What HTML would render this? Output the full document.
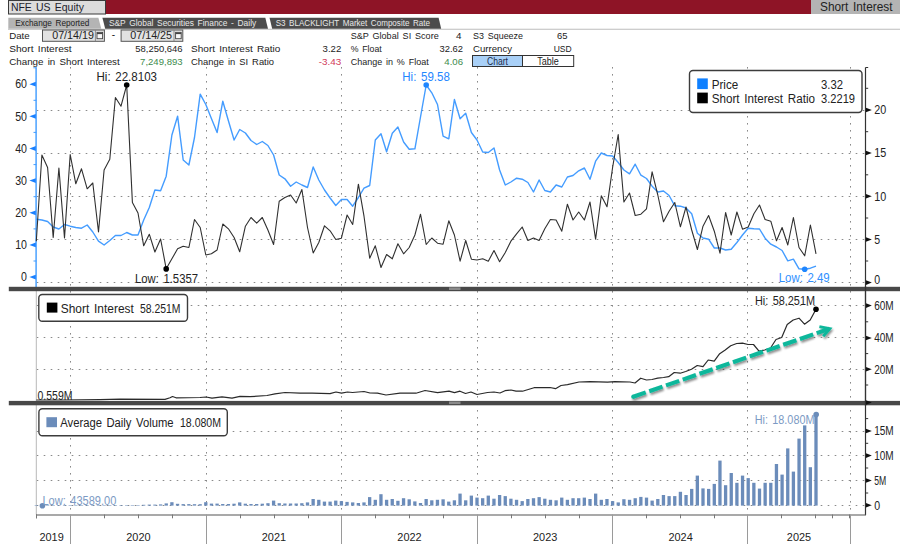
<!DOCTYPE html>
<html lang="en"><head><meta charset="utf-8"><title>NFE US Equity - Short Interest</title>
<style>html,body{margin:0;padding:0;background:#fff;}body{width:900px;height:544px;overflow:hidden;}svg{display:block;}text{font-family:"Liberation Sans", "DejaVu Sans", sans-serif;word-spacing:1.5px;}</style></head><body>
<svg width="900" height="544" viewBox="0 0 900 544">
<rect x="0" y="0" width="900" height="544" fill="#ffffff"/>
<rect x="8.5" y="0" width="891.5" height="14" fill="#8e1426"/>
<rect x="8.5" y="0.5" width="97" height="13.5" fill="#dcdcdc" stroke="#3a3a3a" stroke-width="1"/>
<text x="10.90" y="10.90" font-size="11.8" fill="#1c1c2c" text-anchor="start" textLength="73.0" lengthAdjust="spacingAndGlyphs" >NFE US Equity</text>
<rect x="811" y="0" width="89" height="14" fill="#b4b4b4"/>
<text x="820.00" y="11.10" font-size="13" fill="#222" text-anchor="start" textLength="72.5" lengthAdjust="spacingAndGlyphs" >Short Interest</text>
<line x1="8" y1="29.2" x2="900" y2="29.2" stroke="#bcbcbc" stroke-width="1.1"/>
<polygon points="8.3,17.8 98.4,17.8 101.3,28.7 8.3,28.7" fill="#b4b4b4"/>
<text x="15.30" y="26.10" font-size="9.2" fill="#222" text-anchor="start" textLength="74.0" lengthAdjust="spacingAndGlyphs" >Exchange Reported</text>
<polygon points="102.4,17.8 265.3,17.8 268,28.7 105.2,28.7" fill="#4c4c4c"/>
<text x="108.90" y="26.10" font-size="9.2" fill="#e8e8e8" text-anchor="start" textLength="147.3" lengthAdjust="spacingAndGlyphs" >S&amp;P Global Securities Finance - Daily</text>
<polygon points="269.5,17.8 438.6,17.8 441.2,28.7 272.2,28.7" fill="#4c4c4c"/>
<text x="275.70" y="26.10" font-size="9.2" fill="#e8e8e8" text-anchor="start" textLength="154.3" lengthAdjust="spacingAndGlyphs" >S3 BLACKLIGHT Market Composite Rate</text>
<text x="9.20" y="38.90" font-size="9.8" fill="#222" text-anchor="start" textLength="20.5" lengthAdjust="spacingAndGlyphs" >Date</text>
<rect x="42.5" y="30" width="61.9" height="11.3" fill="#e2e2e2" stroke="#555" stroke-width="1"/>
<text x="52.20" y="38.90" font-size="10.4" fill="#222" text-anchor="start" textLength="41.7" lengthAdjust="spacingAndGlyphs" >07/14/19</text>
<rect x="97.0" y="32.4" width="5.6" height="6.3" fill="#f8f8f8" stroke="#444" stroke-width="0.9"/>
<line x1="97.0" y1="33.5" x2="102.5" y2="33.5" stroke="#444" stroke-width="1.2"/>
<line x1="95.4" y1="30.3" x2="95.4" y2="41" stroke="#777" stroke-width="0.8"/>
<text x="111.80" y="38.00" font-size="10" fill="#222" text-anchor="start" >-</text>
<rect x="121.1" y="30" width="61.7" height="11.3" fill="#e2e2e2" stroke="#555" stroke-width="1"/>
<text x="130.20" y="38.90" font-size="10.4" fill="#222" text-anchor="start" textLength="41.9" lengthAdjust="spacingAndGlyphs" >07/14/25</text>
<rect x="175.6" y="32.4" width="5.6" height="6.3" fill="#f8f8f8" stroke="#444" stroke-width="0.9"/>
<line x1="175.6" y1="33.5" x2="181.1" y2="33.5" stroke="#444" stroke-width="1.2"/>
<line x1="174.0" y1="30.3" x2="174.0" y2="41" stroke="#777" stroke-width="0.8"/>
<text x="9.20" y="51.90" font-size="9.8" fill="#222" text-anchor="start" textLength="62.5" lengthAdjust="spacingAndGlyphs" >Short Interest</text>
<text x="182.60" y="51.90" font-size="9.8" fill="#222" text-anchor="end" textLength="47.3" lengthAdjust="spacingAndGlyphs" >58,250,646</text>
<text x="9.20" y="64.50" font-size="9.8" fill="#222" text-anchor="start" textLength="110.5" lengthAdjust="spacingAndGlyphs" >Change in Short Interest</text>
<text x="182.60" y="64.50" font-size="9.8" fill="#3d8b4d" text-anchor="end" textLength="42.5" lengthAdjust="spacingAndGlyphs" >7,249,893</text>
<text x="191.10" y="51.90" font-size="9.8" fill="#222" text-anchor="start" textLength="89.3" lengthAdjust="spacingAndGlyphs" >Short Interest Ratio</text>
<text x="341.30" y="51.90" font-size="9.8" fill="#222" text-anchor="end" textLength="18.7" lengthAdjust="spacingAndGlyphs" >3.22</text>
<text x="191.10" y="64.50" font-size="9.8" fill="#222" text-anchor="start" textLength="82.9" lengthAdjust="spacingAndGlyphs" >Change in SI Ratio</text>
<text x="341.30" y="64.50" font-size="9.8" fill="#d23a5a" text-anchor="end" textLength="22.5" lengthAdjust="spacingAndGlyphs" >-3.43</text>
<text x="350.70" y="38.90" font-size="9.8" fill="#222" text-anchor="start" textLength="88.0" lengthAdjust="spacingAndGlyphs" >S&amp;P Global SI Score</text>
<text x="461.50" y="38.90" font-size="9.8" fill="#222" text-anchor="end" >4</text>
<text x="350.70" y="51.90" font-size="9.8" fill="#222" text-anchor="start" textLength="31.0" lengthAdjust="spacingAndGlyphs" >% Float</text>
<text x="463.00" y="51.90" font-size="9.8" fill="#222" text-anchor="end" textLength="23.5" lengthAdjust="spacingAndGlyphs" >32.62</text>
<text x="350.70" y="64.50" font-size="9.8" fill="#222" text-anchor="start" textLength="78.0" lengthAdjust="spacingAndGlyphs" >Change in % Float</text>
<text x="463.00" y="64.50" font-size="9.8" fill="#3d8b4d" text-anchor="end" textLength="18.7" lengthAdjust="spacingAndGlyphs" >4.06</text>
<text x="473.00" y="38.90" font-size="9.8" fill="#222" text-anchor="start" textLength="50.0" lengthAdjust="spacingAndGlyphs" >S3 Squeeze</text>
<text x="567.50" y="38.90" font-size="9.8" fill="#222" text-anchor="end" textLength="10.5" lengthAdjust="spacingAndGlyphs" >65</text>
<text x="473.00" y="51.90" font-size="9.8" fill="#222" text-anchor="start" textLength="39.0" lengthAdjust="spacingAndGlyphs" >Currency</text>
<text x="571.70" y="51.90" font-size="9.8" fill="#222" text-anchor="end" textLength="18.0" lengthAdjust="spacingAndGlyphs" >USD</text>
<rect x="472.5" y="55.5" width="50" height="11" fill="#a9d0f7"/>
<rect x="472.5" y="55.5" width="101.2" height="11" fill="none" stroke="#333" stroke-width="1"/>
<line x1="522.5" y1="55.5" x2="522.5" y2="66.5" stroke="#333" stroke-width="1"/>
<text x="497.50" y="64.60" font-size="10" fill="#1c2c4c" text-anchor="middle" textLength="21.0" lengthAdjust="spacingAndGlyphs" >Chart</text>
<text x="548.00" y="64.60" font-size="10" fill="#222" text-anchor="middle" textLength="21.5" lengthAdjust="spacingAndGlyphs" >Table</text>
<line x1="70.5" y1="67" x2="70.5" y2="514" stroke="#8a8a8a" stroke-width="1" stroke-dasharray="1.6 5.4"/>
<line x1="206.5" y1="67" x2="206.5" y2="514" stroke="#8a8a8a" stroke-width="1" stroke-dasharray="1.6 5.4"/>
<line x1="341.5" y1="67" x2="341.5" y2="514" stroke="#8a8a8a" stroke-width="1" stroke-dasharray="1.6 5.4"/>
<line x1="477.5" y1="67" x2="477.5" y2="514" stroke="#8a8a8a" stroke-width="1" stroke-dasharray="1.6 5.4"/>
<line x1="612.5" y1="67" x2="612.5" y2="514" stroke="#8a8a8a" stroke-width="1" stroke-dasharray="1.6 5.4"/>
<line x1="747.5" y1="67" x2="747.5" y2="514" stroke="#8a8a8a" stroke-width="1" stroke-dasharray="1.6 5.4"/>
<line x1="850.5" y1="67" x2="850.5" y2="514" stroke="#8a8a8a" stroke-width="1" stroke-dasharray="1.6 5.4"/>
<line x1="36.7" y1="110.5" x2="866" y2="110.5" stroke="#8a8a8a" stroke-width="1" stroke-dasharray="1.6 5.4"/>
<line x1="36.7" y1="153.5" x2="866" y2="153.5" stroke="#8a8a8a" stroke-width="1" stroke-dasharray="1.6 5.4"/>
<line x1="36.7" y1="196.5" x2="866" y2="196.5" stroke="#8a8a8a" stroke-width="1" stroke-dasharray="1.6 5.4"/>
<line x1="36.7" y1="239.5" x2="866" y2="239.5" stroke="#8a8a8a" stroke-width="1" stroke-dasharray="1.6 5.4"/>
<line x1="36.7" y1="282.5" x2="866" y2="282.5" stroke="#8a8a8a" stroke-width="1" stroke-dasharray="1.6 5.4"/>
<line x1="36.7" y1="305.5" x2="866" y2="305.5" stroke="#8a8a8a" stroke-width="1" stroke-dasharray="1.6 5.4"/>
<line x1="36.7" y1="337.5" x2="866" y2="337.5" stroke="#8a8a8a" stroke-width="1" stroke-dasharray="1.6 5.4"/>
<line x1="36.7" y1="369.5" x2="866" y2="369.5" stroke="#8a8a8a" stroke-width="1" stroke-dasharray="1.6 5.4"/>
<line x1="36.7" y1="431.5" x2="866" y2="431.5" stroke="#8a8a8a" stroke-width="1" stroke-dasharray="1.6 5.4"/>
<line x1="36.7" y1="455.5" x2="866" y2="455.5" stroke="#8a8a8a" stroke-width="1" stroke-dasharray="1.6 5.4"/>
<line x1="36.7" y1="480.5" x2="866" y2="480.5" stroke="#8a8a8a" stroke-width="1" stroke-dasharray="1.6 5.4"/>
<line x1="36.7" y1="505.5" x2="866" y2="505.5" stroke="#8a8a8a" stroke-width="1" stroke-dasharray="1.6 5.4"/>
<line x1="36.1" y1="67.3" x2="36.1" y2="287" stroke="#4aa1ff" stroke-width="1.5"/>
<polygon points="29.4,84.2 35.8,81.8 35.8,86.6" fill="#1a80ff"/>
<text x="27.00" y="88.40" font-size="12" fill="#222" text-anchor="end" textLength="11.8" lengthAdjust="spacingAndGlyphs" >60</text>
<line x1="33.5" y1="100.3" x2="36.3" y2="100.3" stroke="#3f9bff" stroke-width="1"/>
<polygon points="29.4,116.3 35.8,113.9 35.8,118.8" fill="#1a80ff"/>
<text x="27.00" y="120.55" font-size="12" fill="#222" text-anchor="end" textLength="11.8" lengthAdjust="spacingAndGlyphs" >50</text>
<line x1="33.5" y1="132.4" x2="36.3" y2="132.4" stroke="#3f9bff" stroke-width="1"/>
<polygon points="29.4,148.5 35.8,146.1 35.8,150.9" fill="#1a80ff"/>
<text x="27.00" y="152.70" font-size="12" fill="#222" text-anchor="end" textLength="11.8" lengthAdjust="spacingAndGlyphs" >40</text>
<line x1="33.5" y1="164.6" x2="36.3" y2="164.6" stroke="#3f9bff" stroke-width="1"/>
<polygon points="29.4,180.6 35.8,178.2 35.8,183.0" fill="#1a80ff"/>
<text x="27.00" y="184.85" font-size="12" fill="#222" text-anchor="end" textLength="11.8" lengthAdjust="spacingAndGlyphs" >30</text>
<line x1="33.5" y1="196.7" x2="36.3" y2="196.7" stroke="#3f9bff" stroke-width="1"/>
<polygon points="29.4,212.8 35.8,210.4 35.8,215.2" fill="#1a80ff"/>
<text x="27.00" y="217.00" font-size="12" fill="#222" text-anchor="end" textLength="11.8" lengthAdjust="spacingAndGlyphs" >20</text>
<line x1="33.5" y1="228.9" x2="36.3" y2="228.9" stroke="#3f9bff" stroke-width="1"/>
<polygon points="29.4,244.9 35.8,242.5 35.8,247.3" fill="#1a80ff"/>
<text x="27.00" y="249.15" font-size="12" fill="#222" text-anchor="end" textLength="11.8" lengthAdjust="spacingAndGlyphs" >10</text>
<line x1="33.5" y1="261.0" x2="36.3" y2="261.0" stroke="#3f9bff" stroke-width="1"/>
<polygon points="29.4,277.1 35.8,274.7 35.8,279.5" fill="#1a80ff"/>
<text x="27.00" y="281.30" font-size="12" fill="#222" text-anchor="end" textLength="5.9" lengthAdjust="spacingAndGlyphs" >0</text>
<line x1="33.3" y1="67.8" x2="36.3" y2="67.8" stroke="#4aa1ff" stroke-width="1"/>
<polyline points="36.3,219.2 41.9,220.0 47.6,221.5 53.2,227.0 58.9,229.0 64.5,224.5 70.2,226.2 75.8,227.5 81.5,228.2 87.2,225.0 92.8,232.0 98.5,241.2 104.1,245.0 109.8,240.5 115.4,235.5 121.0,235.5 126.7,232.5 132.4,235.0 138.0,235.0 143.7,220.0 149.3,207.5 154.9,190.0 160.6,190.8 166.2,176.2 171.9,135.0 177.6,116.2 183.2,160.0 188.9,165.0 194.5,137.5 200.2,94.2 205.8,104.5 211.4,118.5 217.1,132.5 222.8,101.2 228.4,120.8 234.1,140.0 239.7,129.5 245.4,133.0 251.0,140.5 256.7,144.5 262.3,141.5 267.9,145.5 273.6,155.0 279.2,175.0 284.9,178.8 290.6,186.2 296.2,182.0 301.9,185.0 307.5,187.5 313.2,167.0 318.8,180.0 324.5,190.0 330.1,198.0 335.8,205.5 341.4,199.5 347.1,199.5 352.7,206.2 358.4,197.5 364.0,188.2 369.7,185.5 375.3,140.0 381.0,133.8 386.6,151.8 392.3,133.2 397.9,127.0 403.6,142.0 409.2,149.2 414.9,148.8 420.5,117.0 426.2,85.0 431.8,92.8 437.5,104.5 443.1,136.2 448.8,138.8 454.4,99.5 460.1,118.8 465.7,113.2 471.4,132.5 477.0,140.0 482.7,152.0 488.3,152.5 494.0,148.0 499.6,170.0 505.3,185.0 510.9,182.0 516.6,178.2 522.2,179.2 527.9,182.5 533.5,192.0 539.1,180.0 544.8,190.5 550.4,192.0 556.1,185.0 561.8,187.0 567.4,177.0 573.0,175.5 578.7,170.8 584.4,168.0 590.0,179.2 595.6,161.2 601.3,153.0 607.0,155.5 612.6,156.0 618.2,162.5 623.9,170.0 629.5,173.8 635.2,164.2 640.9,175.2 646.5,178.5 652.1,186.2 657.8,192.0 663.5,191.0 669.1,195.5 674.8,205.8 680.4,206.2 686.0,208.0 691.7,213.8 697.4,233.2 703.0,238.0 708.6,239.2 714.3,248.0 720.0,248.0 725.6,250.0 731.2,249.2 736.9,242.5 742.5,235.0 748.2,228.2 753.9,228.8 759.5,229.0 765.1,238.2 770.8,244.2 776.5,247.0 782.1,250.5 787.8,260.8 793.4,259.2 799.0,268.8 804.7,269.2 810.4,268.2 816.0,266.2" fill="none" stroke="#449cff" stroke-width="1.4" stroke-linejoin="round"/>
<polyline points="36.3,241.2 41.9,155.0 47.6,167.5 53.2,237.5 58.9,168.0 64.5,238.0 70.2,154.5 75.8,183.8 81.5,168.8 87.2,188.8 92.8,183.0 98.5,232.0 104.1,170.0 109.8,159.2 115.4,97.5 121.0,106.2 126.7,85.0 132.4,202.5 138.0,213.0 143.7,245.8 149.3,234.2 154.9,252.0 160.6,239.0 166.2,268.8 171.9,258.8 177.6,248.8 183.2,246.2 188.9,247.5 194.5,219.5 200.2,227.5 205.8,255.0 211.4,253.8 217.1,250.0 222.8,224.0 228.4,228.8 234.1,237.5 239.7,251.8 245.4,226.2 251.0,217.5 256.7,223.2 262.3,217.5 267.9,230.0 273.6,244.5 279.2,201.2 284.9,197.5 290.6,195.0 296.2,203.0 301.9,189.5 307.5,227.5 313.2,253.0 318.8,242.5 324.5,225.8 330.1,230.8 335.8,239.5 341.4,238.2 347.1,215.0 352.7,224.5 358.4,184.2 364.0,216.2 369.7,258.2 375.3,245.8 381.0,267.5 386.6,254.5 392.3,258.8 397.9,243.8 403.6,253.8 409.2,247.5 414.9,235.0 420.5,214.2 426.2,244.5 431.8,238.0 437.5,243.2 443.1,244.2 448.8,220.8 454.4,235.0 460.1,261.2 465.7,240.5 471.4,259.2 477.0,260.0 482.7,258.8 488.3,261.2 494.0,250.5 499.6,261.8 505.3,252.5 510.9,241.2 516.6,233.8 522.2,227.0 527.9,240.5 533.5,238.0 539.1,240.5 544.8,228.8 550.4,219.5 556.1,220.0 561.8,231.2 567.4,204.2 573.0,220.0 578.7,212.0 584.4,220.0 590.0,202.0 595.6,239.2 601.3,195.8 607.0,206.8 612.6,167.5 618.2,134.5 623.9,202.0 629.5,193.0 635.2,215.5 640.9,214.2 646.5,208.8 652.1,171.8 657.8,195.0 663.5,221.8 669.1,211.2 674.8,202.5 680.4,226.8 686.0,207.0 691.7,230.0 697.4,249.5 703.0,226.2 708.6,215.5 714.3,231.2 720.0,253.2 725.6,212.5 731.2,235.0 736.9,212.0 742.5,229.2 748.2,227.0 753.9,213.8 759.5,205.0 765.1,219.5 770.8,221.2 776.5,240.8 782.1,227.5 787.8,245.0 793.4,217.5 799.0,247.5 804.7,255.8 810.4,225.0 816.0,253.8" fill="none" stroke="#303030" stroke-width="1.1" stroke-linejoin="round"/>
<circle cx="126.7" cy="85" r="2.8" fill="#000"/>
<text x="96.50" y="81.00" font-size="12" fill="#222" text-anchor="start" textLength="60.5" lengthAdjust="spacingAndGlyphs" >Hi: 22.8103</text>
<circle cx="166.2" cy="268.9" r="2.8" fill="#000"/>
<text x="135.00" y="282.50" font-size="12" fill="#222" text-anchor="start" textLength="63.0" lengthAdjust="spacingAndGlyphs" >Low: 1.5357</text>
<circle cx="426.2" cy="85" r="2.8" fill="#1f86ff"/>
<text x="402.30" y="80.80" font-size="12" fill="#1f86ff" text-anchor="start" textLength="47.5" lengthAdjust="spacingAndGlyphs" >Hi: 59.58</text>
<circle cx="804.7" cy="269.2" r="2.8" fill="#1f86ff"/>
<text x="778.70" y="281.80" font-size="12" fill="#2f8fff" text-anchor="start" textLength="51.0" lengthAdjust="spacingAndGlyphs" >Low: 2.49</text>
<rect x="689.5" y="70.5" width="172.5" height="42" rx="3.5" fill="#fff" stroke="#3c3c3c" stroke-width="1.4"/>
<rect x="697.2" y="78.4" width="10.6" height="10.7" fill="#0f80ff"/>
<rect x="697.2" y="92.6" width="10.6" height="10.7" fill="#000"/>
<text x="711.70" y="88.80" font-size="12" fill="#222" text-anchor="start" textLength="26.5" lengthAdjust="spacingAndGlyphs" >Price</text>
<text x="821.00" y="88.80" font-size="12" fill="#222" text-anchor="start" textLength="22.0" lengthAdjust="spacingAndGlyphs" >3.32</text>
<text x="711.70" y="103.20" font-size="12" fill="#222" text-anchor="start" textLength="103.3" lengthAdjust="spacingAndGlyphs" >Short Interest Ratio</text>
<text x="821.00" y="103.20" font-size="12" fill="#222" text-anchor="start" textLength="34.0" lengthAdjust="spacingAndGlyphs" >3.2219</text>
<line x1="865.5" y1="67.5" x2="865.5" y2="515" stroke="#333" stroke-width="1.2"/>
<line x1="865.5" y1="67.5" x2="868.2" y2="67.5" stroke="#333" stroke-width="1"/>
<polygon points="865.9,107.7 865.9,112.3 871.8,110.0" fill="#111"/>
<text x="874.20" y="114.30" font-size="12" fill="#222" text-anchor="start" textLength="12.0" lengthAdjust="spacingAndGlyphs" >20</text>
<polygon points="865.9,150.7 865.9,155.3 871.8,153.0" fill="#111"/>
<text x="874.20" y="157.30" font-size="12" fill="#222" text-anchor="start" textLength="12.0" lengthAdjust="spacingAndGlyphs" >15</text>
<polygon points="865.9,193.9 865.9,198.5 871.8,196.2" fill="#111"/>
<text x="874.20" y="200.50" font-size="12" fill="#222" text-anchor="start" textLength="12.0" lengthAdjust="spacingAndGlyphs" >10</text>
<polygon points="865.9,237.2 865.9,241.8 871.8,239.5" fill="#111"/>
<text x="874.20" y="243.80" font-size="12" fill="#222" text-anchor="start" textLength="5.9" lengthAdjust="spacingAndGlyphs" >5</text>
<polygon points="865.9,280.3 865.9,284.9 871.8,282.6" fill="#111"/>
<text x="874.20" y="283.50" font-size="12" fill="#222" text-anchor="start" textLength="5.9" lengthAdjust="spacingAndGlyphs" >0</text>
<line x1="865.5" y1="88.3" x2="868.2" y2="88.3" stroke="#333" stroke-width="1"/>
<line x1="865.5" y1="131.7" x2="868.2" y2="131.7" stroke="#333" stroke-width="1"/>
<line x1="865.5" y1="174.8" x2="868.2" y2="174.8" stroke="#333" stroke-width="1"/>
<line x1="865.5" y1="218.0" x2="868.2" y2="218.0" stroke="#333" stroke-width="1"/>
<line x1="865.5" y1="261.0" x2="868.2" y2="261.0" stroke="#333" stroke-width="1"/>
<line x1="36.3" y1="291" x2="36.3" y2="402" stroke="#b8b8b8" stroke-width="1"/>
<polyline points="36.3,400.0 60.0,400.0 100.0,399.6 120.0,399.2 165.0,399.4 170.0,397.8 172.5,396.5 176.0,397.8 200.0,397.5 206.0,397.0 212.0,398.2 222.0,396.8 232.0,398.2 240.0,396.3 250.0,396.7 267.0,395.5 275.0,393.8 285.0,392.5 300.0,393.2 312.0,393.2 330.0,393.7 336.0,392.0 341.5,393.2 347.5,392.0 352.5,392.5 364.0,391.5 370.0,393.0 377.5,393.2 386.0,395.0 400.0,393.2 416.0,393.2 425.0,390.5 437.5,392.7 449.0,391.2 454.5,392.7 460.0,391.2 465.5,393.5 471.0,392.0 477.0,394.5 487.5,392.5 494.0,392.0 500.0,393.0 505.0,390.7 511.0,390.0 516.0,391.2 522.5,391.2 534.0,387.7 550.0,387.5 555.5,388.7 561.0,385.5 567.5,384.7 579.0,382.0 590.0,381.7 607.5,382.2 615.0,381.7 630.0,382.0 635.0,383.0 640.7,378.2 646.5,380.0 652.0,379.5 657.7,378.2 663.5,377.5 668.7,376.7 674.2,372.5 680.2,373.2 685.7,371.5 691.5,369.2 697.2,365.5 703.0,366.7 708.2,360.0 714.2,361.2 719.7,353.7 725.2,350.0 730.7,345.7 736.7,343.5 742.5,343.2 748.0,344.5 753.5,344.5 759.0,351.2 764.7,350.0 770.5,348.0 776.0,339.5 781.7,337.5 787.2,324.5 793.2,320.0 799.0,318.2 804.5,324.2 810.2,320.0 816.0,309.2" fill="none" stroke="#2a2a2a" stroke-width="1.2" stroke-linejoin="round"/>
<circle cx="816" cy="309.2" r="2.8" fill="#000"/>
<text x="755.00" y="304.80" font-size="12" fill="#222" text-anchor="start" textLength="60.0" lengthAdjust="spacingAndGlyphs" >Hi: 58.251M</text>
<text x="37.50" y="400.00" font-size="12" fill="#222" text-anchor="start" textLength="35.0" lengthAdjust="spacingAndGlyphs" >0.559M</text>
<rect x="38.8" y="294.5" width="148.7" height="26.8" rx="3.5" fill="#fff" stroke="#3c3c3c" stroke-width="1.4"/>
<rect x="46.8" y="302.6" width="10.6" height="10" fill="#000"/>
<text x="60.80" y="312.60" font-size="12" fill="#222" text-anchor="start" textLength="73.0" lengthAdjust="spacingAndGlyphs" >Short Interest</text>
<text x="140.00" y="312.60" font-size="12" fill="#222" text-anchor="start" textLength="40.5" lengthAdjust="spacingAndGlyphs" >58.251M</text>
<polygon points="865.9,303.3 865.9,307.9 871.8,305.6" fill="#111"/>
<text x="874.20" y="309.90" font-size="12" fill="#222" text-anchor="start" textLength="19.5" lengthAdjust="spacingAndGlyphs" >60M</text>
<polygon points="865.9,335.7 865.9,340.3 871.8,338.0" fill="#111"/>
<text x="874.20" y="342.30" font-size="12" fill="#222" text-anchor="start" textLength="19.5" lengthAdjust="spacingAndGlyphs" >40M</text>
<polygon points="865.9,366.9 865.9,371.5 871.8,369.2" fill="#111"/>
<text x="874.20" y="373.50" font-size="12" fill="#222" text-anchor="start" textLength="19.5" lengthAdjust="spacingAndGlyphs" >20M</text>
<line x1="865.5" y1="321.8" x2="868.2" y2="321.8" stroke="#333" stroke-width="1"/>
<line x1="865.5" y1="353.6" x2="868.2" y2="353.6" stroke="#333" stroke-width="1"/>
<line x1="865.5" y1="385.0" x2="868.2" y2="385.0" stroke="#333" stroke-width="1"/>
<defs><filter id="sh" x="-5%" y="-20%" width="110%" height="150%"><feGaussianBlur in="SourceAlpha" stdDeviation="1.2"/><feOffset dx="1.2" dy="1.8"/><feComponentTransfer><feFuncA type="linear" slope="0.45"/></feComponentTransfer><feMerge><feMergeNode/><feMergeNode in="SourceGraphic"/></feMerge></filter></defs>
<g filter="url(#sh)" stroke="#0cb79b" fill="none">
<line x1="632.5" y1="397" x2="829.6" y2="328.7" stroke-width="4.1" stroke-dasharray="14 3.72"/>
<circle cx="633.2" cy="396.8" r="2.05" fill="#0cb79b" stroke="none"/>
<polyline points="819.4,326.6 829.8,328.6 823.2,336.2" stroke-width="2.9" stroke-linejoin="miter" stroke-miterlimit="10"/>
</g>
<line x1="36.3" y1="405" x2="36.3" y2="514.5" stroke="#b8b8b8" stroke-width="1"/>
<rect x="34.65" y="505.1" width="3.3" height="0.5" fill="#6b8cba"/>
<rect x="40.30" y="505.1" width="3.3" height="0.5" fill="#6b8cba"/>
<rect x="45.95" y="505.1" width="3.3" height="0.5" fill="#6b8cba"/>
<rect x="51.60" y="505.1" width="3.3" height="0.5" fill="#6b8cba"/>
<rect x="57.25" y="505.1" width="3.3" height="0.5" fill="#6b8cba"/>
<rect x="62.90" y="505.1" width="3.3" height="0.5" fill="#6b8cba"/>
<rect x="68.55" y="505.1" width="3.3" height="0.5" fill="#6b8cba"/>
<rect x="74.20" y="505.1" width="3.3" height="0.5" fill="#6b8cba"/>
<rect x="79.85" y="505.1" width="3.3" height="0.5" fill="#6b8cba"/>
<rect x="85.50" y="505.1" width="3.3" height="0.5" fill="#6b8cba"/>
<rect x="91.15" y="505.1" width="3.3" height="0.5" fill="#6b8cba"/>
<rect x="96.80" y="505.1" width="3.3" height="0.5" fill="#6b8cba"/>
<rect x="102.45" y="505.1" width="3.3" height="0.5" fill="#6b8cba"/>
<rect x="108.10" y="505.1" width="3.3" height="0.5" fill="#6b8cba"/>
<rect x="113.75" y="505.1" width="3.3" height="0.5" fill="#6b8cba"/>
<rect x="119.40" y="505.1" width="3.3" height="0.5" fill="#6b8cba"/>
<rect x="125.05" y="505.1" width="3.3" height="0.5" fill="#6b8cba"/>
<rect x="130.70" y="505.1" width="3.3" height="0.5" fill="#6b8cba"/>
<rect x="136.35" y="505.1" width="3.3" height="0.5" fill="#6b8cba"/>
<rect x="142.00" y="504.8" width="3.3" height="0.8" fill="#6b8cba"/>
<rect x="147.65" y="504.6" width="3.3" height="1.0" fill="#6b8cba"/>
<rect x="153.30" y="504.6" width="3.3" height="1.0" fill="#6b8cba"/>
<rect x="158.95" y="504.4" width="3.3" height="1.2" fill="#6b8cba"/>
<rect x="164.60" y="503.4" width="3.3" height="2.2" fill="#6b8cba"/>
<rect x="170.25" y="502.2" width="3.3" height="3.4" fill="#6b8cba"/>
<rect x="175.90" y="503.8" width="3.3" height="1.8" fill="#6b8cba"/>
<rect x="181.55" y="504.1" width="3.3" height="1.5" fill="#6b8cba"/>
<rect x="187.20" y="504.1" width="3.3" height="1.5" fill="#6b8cba"/>
<rect x="192.85" y="504.2" width="3.3" height="1.4" fill="#6b8cba"/>
<rect x="198.50" y="504.2" width="3.3" height="1.4" fill="#6b8cba"/>
<rect x="204.15" y="502.2" width="3.3" height="3.4" fill="#6b8cba"/>
<rect x="209.80" y="503.6" width="3.3" height="2.0" fill="#6b8cba"/>
<rect x="215.45" y="503.6" width="3.3" height="2.0" fill="#6b8cba"/>
<rect x="221.10" y="504.0" width="3.3" height="1.6" fill="#6b8cba"/>
<rect x="226.75" y="504.0" width="3.3" height="1.6" fill="#6b8cba"/>
<rect x="232.40" y="503.7" width="3.3" height="1.9" fill="#6b8cba"/>
<rect x="238.05" y="502.4" width="3.3" height="3.2" fill="#6b8cba"/>
<rect x="243.70" y="503.7" width="3.3" height="1.9" fill="#6b8cba"/>
<rect x="249.35" y="504.0" width="3.3" height="1.6" fill="#6b8cba"/>
<rect x="255.00" y="504.0" width="3.3" height="1.6" fill="#6b8cba"/>
<rect x="260.65" y="503.7" width="3.3" height="1.9" fill="#6b8cba"/>
<rect x="266.30" y="503.2" width="3.3" height="2.4" fill="#6b8cba"/>
<rect x="271.95" y="500.6" width="3.3" height="5.0" fill="#6b8cba"/>
<rect x="277.60" y="503.2" width="3.3" height="2.4" fill="#6b8cba"/>
<rect x="283.25" y="503.5" width="3.3" height="2.1" fill="#6b8cba"/>
<rect x="288.90" y="503.5" width="3.3" height="2.1" fill="#6b8cba"/>
<rect x="294.55" y="503.5" width="3.3" height="2.1" fill="#6b8cba"/>
<rect x="300.20" y="503.2" width="3.3" height="2.4" fill="#6b8cba"/>
<rect x="305.85" y="502.4" width="3.3" height="3.2" fill="#6b8cba"/>
<rect x="311.50" y="499.0" width="3.3" height="6.6" fill="#6b8cba"/>
<rect x="317.15" y="499.8" width="3.3" height="5.8" fill="#6b8cba"/>
<rect x="322.80" y="501.6" width="3.3" height="4.0" fill="#6b8cba"/>
<rect x="328.45" y="501.6" width="3.3" height="4.0" fill="#6b8cba"/>
<rect x="334.10" y="500.6" width="3.3" height="5.0" fill="#6b8cba"/>
<rect x="339.75" y="501.1" width="3.3" height="4.5" fill="#6b8cba"/>
<rect x="345.40" y="501.9" width="3.3" height="3.7" fill="#6b8cba"/>
<rect x="351.05" y="502.4" width="3.3" height="3.2" fill="#6b8cba"/>
<rect x="356.70" y="503.0" width="3.3" height="2.6" fill="#6b8cba"/>
<rect x="362.35" y="502.4" width="3.3" height="3.2" fill="#6b8cba"/>
<rect x="368.00" y="497.1" width="3.3" height="8.5" fill="#6b8cba"/>
<rect x="373.65" y="499.8" width="3.3" height="5.8" fill="#6b8cba"/>
<rect x="379.30" y="494.2" width="3.3" height="11.4" fill="#6b8cba"/>
<rect x="384.95" y="499.8" width="3.3" height="5.8" fill="#6b8cba"/>
<rect x="390.60" y="499.0" width="3.3" height="6.6" fill="#6b8cba"/>
<rect x="396.25" y="500.8" width="3.3" height="4.8" fill="#6b8cba"/>
<rect x="401.90" y="498.2" width="3.3" height="7.4" fill="#6b8cba"/>
<rect x="407.55" y="499.3" width="3.3" height="6.3" fill="#6b8cba"/>
<rect x="413.20" y="501.4" width="3.3" height="4.2" fill="#6b8cba"/>
<rect x="418.85" y="503.0" width="3.3" height="2.6" fill="#6b8cba"/>
<rect x="424.50" y="499.0" width="3.3" height="6.6" fill="#6b8cba"/>
<rect x="430.15" y="500.3" width="3.3" height="5.3" fill="#6b8cba"/>
<rect x="435.80" y="499.8" width="3.3" height="5.8" fill="#6b8cba"/>
<rect x="441.45" y="499.3" width="3.3" height="6.3" fill="#6b8cba"/>
<rect x="447.10" y="501.6" width="3.3" height="4.0" fill="#6b8cba"/>
<rect x="452.75" y="500.3" width="3.3" height="5.3" fill="#6b8cba"/>
<rect x="458.40" y="493.6" width="3.3" height="12.0" fill="#6b8cba"/>
<rect x="464.05" y="500.3" width="3.3" height="5.3" fill="#6b8cba"/>
<rect x="469.70" y="495.6" width="3.3" height="10.0" fill="#6b8cba"/>
<rect x="475.35" y="497.6" width="3.3" height="8.0" fill="#6b8cba"/>
<rect x="481.00" y="498.2" width="3.3" height="7.4" fill="#6b8cba"/>
<rect x="486.65" y="495.6" width="3.3" height="10.0" fill="#6b8cba"/>
<rect x="492.30" y="498.7" width="3.3" height="6.9" fill="#6b8cba"/>
<rect x="497.95" y="495.0" width="3.3" height="10.6" fill="#6b8cba"/>
<rect x="503.60" y="496.1" width="3.3" height="9.5" fill="#6b8cba"/>
<rect x="509.25" y="498.7" width="3.3" height="6.9" fill="#6b8cba"/>
<rect x="514.90" y="499.8" width="3.3" height="5.8" fill="#6b8cba"/>
<rect x="520.55" y="501.1" width="3.3" height="4.5" fill="#6b8cba"/>
<rect x="526.20" y="499.0" width="3.3" height="6.6" fill="#6b8cba"/>
<rect x="531.85" y="498.2" width="3.3" height="7.4" fill="#6b8cba"/>
<rect x="537.50" y="497.1" width="3.3" height="8.5" fill="#6b8cba"/>
<rect x="543.15" y="498.7" width="3.3" height="6.9" fill="#6b8cba"/>
<rect x="548.80" y="499.8" width="3.3" height="5.8" fill="#6b8cba"/>
<rect x="554.45" y="500.3" width="3.3" height="5.3" fill="#6b8cba"/>
<rect x="560.10" y="497.6" width="3.3" height="8.0" fill="#6b8cba"/>
<rect x="565.75" y="499.8" width="3.3" height="5.8" fill="#6b8cba"/>
<rect x="571.40" y="498.2" width="3.3" height="7.4" fill="#6b8cba"/>
<rect x="577.05" y="498.2" width="3.3" height="7.4" fill="#6b8cba"/>
<rect x="582.70" y="497.6" width="3.3" height="8.0" fill="#6b8cba"/>
<rect x="588.35" y="499.0" width="3.3" height="6.6" fill="#6b8cba"/>
<rect x="594.00" y="493.6" width="3.3" height="12.0" fill="#6b8cba"/>
<rect x="599.65" y="499.8" width="3.3" height="5.8" fill="#6b8cba"/>
<rect x="605.30" y="499.0" width="3.3" height="6.6" fill="#6b8cba"/>
<rect x="610.95" y="501.1" width="3.3" height="4.5" fill="#6b8cba"/>
<rect x="616.60" y="502.4" width="3.3" height="3.2" fill="#6b8cba"/>
<rect x="622.25" y="499.2" width="3.3" height="6.4" fill="#6b8cba"/>
<rect x="627.90" y="499.8" width="3.3" height="5.8" fill="#6b8cba"/>
<rect x="633.55" y="498.2" width="3.3" height="7.4" fill="#6b8cba"/>
<rect x="639.20" y="496.9" width="3.3" height="8.7" fill="#6b8cba"/>
<rect x="644.85" y="497.6" width="3.3" height="8.0" fill="#6b8cba"/>
<rect x="650.50" y="500.6" width="3.3" height="5.0" fill="#6b8cba"/>
<rect x="656.15" y="499.0" width="3.3" height="6.6" fill="#6b8cba"/>
<rect x="661.80" y="495.0" width="3.3" height="10.6" fill="#6b8cba"/>
<rect x="667.45" y="496.1" width="3.3" height="9.5" fill="#6b8cba"/>
<rect x="673.10" y="496.1" width="3.3" height="9.5" fill="#6b8cba"/>
<rect x="678.75" y="491.8" width="3.3" height="13.8" fill="#6b8cba"/>
<rect x="684.40" y="495.0" width="3.3" height="10.6" fill="#6b8cba"/>
<rect x="690.05" y="488.9" width="3.3" height="16.7" fill="#6b8cba"/>
<rect x="695.70" y="475.6" width="3.3" height="30.0" fill="#6b8cba"/>
<rect x="701.35" y="488.4" width="3.3" height="17.2" fill="#6b8cba"/>
<rect x="707.00" y="488.9" width="3.3" height="16.7" fill="#6b8cba"/>
<rect x="712.65" y="483.9" width="3.3" height="21.7" fill="#6b8cba"/>
<rect x="718.30" y="460.6" width="3.3" height="45.0" fill="#6b8cba"/>
<rect x="723.95" y="485.2" width="3.3" height="20.4" fill="#6b8cba"/>
<rect x="729.60" y="473.0" width="3.3" height="32.6" fill="#6b8cba"/>
<rect x="735.25" y="482.8" width="3.3" height="22.8" fill="#6b8cba"/>
<rect x="740.90" y="475.6" width="3.3" height="30.0" fill="#6b8cba"/>
<rect x="746.55" y="478.1" width="3.3" height="27.5" fill="#6b8cba"/>
<rect x="752.20" y="482.8" width="3.3" height="22.8" fill="#6b8cba"/>
<rect x="757.85" y="488.6" width="3.3" height="17.0" fill="#6b8cba"/>
<rect x="763.50" y="482.8" width="3.3" height="22.8" fill="#6b8cba"/>
<rect x="769.15" y="482.8" width="3.3" height="22.8" fill="#6b8cba"/>
<rect x="774.80" y="464.0" width="3.3" height="41.6" fill="#6b8cba"/>
<rect x="780.45" y="474.6" width="3.3" height="31.0" fill="#6b8cba"/>
<rect x="786.10" y="448.4" width="3.3" height="57.2" fill="#6b8cba"/>
<rect x="791.75" y="471.6" width="3.3" height="34.0" fill="#6b8cba"/>
<rect x="797.40" y="438.6" width="3.3" height="67.0" fill="#6b8cba"/>
<rect x="803.05" y="425.4" width="3.3" height="80.2" fill="#6b8cba"/>
<rect x="808.70" y="467.2" width="3.3" height="38.4" fill="#6b8cba"/>
<rect x="814.35" y="414.3" width="3.3" height="91.3" fill="#6b8cba"/>
<circle cx="816.2" cy="414.6" r="2.8" fill="#6b8cba"/>
<text x="754.80" y="424.30" font-size="12" fill="#7c9ac4" text-anchor="start" textLength="59.6" lengthAdjust="spacingAndGlyphs" >Hi: 18.080M</text>
<circle cx="42.4" cy="505.8" r="2.8" fill="#6b8cba"/>
<text x="42.40" y="504.80" font-size="12" fill="#7c9ac4" text-anchor="start" textLength="74.0" lengthAdjust="spacingAndGlyphs" >Low: 43589.00</text>
<rect x="38.9" y="408.7" width="188.4" height="27" rx="3.5" fill="#fff" stroke="#3c3c3c" stroke-width="1.4"/>
<rect x="46.4" y="417.2" width="10.6" height="10" fill="#6b8cba"/>
<text x="60.30" y="427.00" font-size="12" fill="#222" text-anchor="start" textLength="113.2" lengthAdjust="spacingAndGlyphs" >Average Daily Volume</text>
<text x="180.00" y="427.00" font-size="12" fill="#222" text-anchor="start" textLength="41.0" lengthAdjust="spacingAndGlyphs" >18.080M</text>
<polygon points="865.9,428.7 865.9,433.3 871.8,431.0" fill="#111"/>
<text x="874.20" y="435.30" font-size="12" fill="#222" text-anchor="start" textLength="19.5" lengthAdjust="spacingAndGlyphs" >15M</text>
<polygon points="865.9,453.3 865.9,457.9 871.8,455.6" fill="#111"/>
<text x="874.20" y="459.90" font-size="12" fill="#222" text-anchor="start" textLength="19.5" lengthAdjust="spacingAndGlyphs" >10M</text>
<polygon points="865.9,478.2 865.9,482.8 871.8,480.5" fill="#111"/>
<text x="874.20" y="484.80" font-size="12" fill="#222" text-anchor="start" textLength="12.0" lengthAdjust="spacingAndGlyphs" >5M</text>
<polygon points="865.9,503.0 865.9,507.6 871.8,505.3" fill="#111"/>
<text x="874.20" y="509.60" font-size="12" fill="#222" text-anchor="start" textLength="5.9" lengthAdjust="spacingAndGlyphs" >0</text>
<line x1="865.5" y1="418.6" x2="868.2" y2="418.6" stroke="#333" stroke-width="1"/>
<line x1="865.5" y1="443.3" x2="868.2" y2="443.3" stroke="#333" stroke-width="1"/>
<line x1="865.5" y1="468.0" x2="868.2" y2="468.0" stroke="#333" stroke-width="1"/>
<line x1="865.5" y1="493.0" x2="868.2" y2="493.0" stroke="#333" stroke-width="1"/>
<rect x="8.8" y="286.8" width="891.2" height="4.4" fill="#484848"/>
<rect x="449" y="287.4" width="11.5" height="2.6" fill="#8a8a8a"/>
<rect x="8.8" y="400.9" width="891.2" height="4.4" fill="#484848"/>
<rect x="449" y="401.5" width="11.5" height="2.6" fill="#8a8a8a"/>
<line x1="865.5" y1="286" x2="865.5" y2="406" stroke="#333" stroke-width="1.2"/>
<polygon points="865.9,400.2 865.9,404.8 871.8,402.5" fill="#111"/>
<line x1="36" y1="515" x2="866" y2="515" stroke="#555" stroke-width="1.1"/>
<line x1="70.5" y1="514.5" x2="70.5" y2="544" stroke="#9a9a9a" stroke-width="1"/>
<line x1="206.5" y1="514.5" x2="206.5" y2="544" stroke="#9a9a9a" stroke-width="1"/>
<line x1="341.5" y1="514.5" x2="341.5" y2="544" stroke="#9a9a9a" stroke-width="1"/>
<line x1="477.5" y1="514.5" x2="477.5" y2="544" stroke="#9a9a9a" stroke-width="1"/>
<line x1="612.5" y1="514.5" x2="612.5" y2="544" stroke="#9a9a9a" stroke-width="1"/>
<line x1="747.5" y1="514.5" x2="747.5" y2="544" stroke="#9a9a9a" stroke-width="1"/>
<line x1="850.5" y1="514.5" x2="850.5" y2="544" stroke="#9a9a9a" stroke-width="1"/>
<line x1="36.5" y1="514.5" x2="36.5" y2="518.3" stroke="#777" stroke-width="1"/>
<line x1="104.5" y1="514.5" x2="104.5" y2="518.3" stroke="#777" stroke-width="1"/>
<line x1="138.5" y1="514.5" x2="138.5" y2="518.3" stroke="#777" stroke-width="1"/>
<line x1="172.5" y1="514.5" x2="172.5" y2="518.3" stroke="#777" stroke-width="1"/>
<line x1="240.5" y1="514.5" x2="240.5" y2="518.3" stroke="#777" stroke-width="1"/>
<line x1="274.5" y1="514.5" x2="274.5" y2="518.3" stroke="#777" stroke-width="1"/>
<line x1="308.5" y1="514.5" x2="308.5" y2="518.3" stroke="#777" stroke-width="1"/>
<line x1="375.5" y1="514.5" x2="375.5" y2="518.3" stroke="#777" stroke-width="1"/>
<line x1="409.5" y1="514.5" x2="409.5" y2="518.3" stroke="#777" stroke-width="1"/>
<line x1="443.5" y1="514.5" x2="443.5" y2="518.3" stroke="#777" stroke-width="1"/>
<line x1="511.5" y1="514.5" x2="511.5" y2="518.3" stroke="#777" stroke-width="1"/>
<line x1="545.5" y1="514.5" x2="545.5" y2="518.3" stroke="#777" stroke-width="1"/>
<line x1="579.5" y1="514.5" x2="579.5" y2="518.3" stroke="#777" stroke-width="1"/>
<line x1="646.5" y1="514.5" x2="646.5" y2="518.3" stroke="#777" stroke-width="1"/>
<line x1="680.5" y1="514.5" x2="680.5" y2="518.3" stroke="#777" stroke-width="1"/>
<line x1="714.5" y1="514.5" x2="714.5" y2="518.3" stroke="#777" stroke-width="1"/>
<line x1="781.5" y1="514.5" x2="781.5" y2="518.3" stroke="#777" stroke-width="1"/>
<line x1="815.5" y1="514.5" x2="815.5" y2="518.3" stroke="#777" stroke-width="1"/>
<line x1="849.5" y1="514.5" x2="849.5" y2="518.3" stroke="#777" stroke-width="1"/>
<line x1="36.5" y1="514.5" x2="36.5" y2="518.3" stroke="#777" stroke-width="1"/>
<line x1="832.5" y1="514.5" x2="832.5" y2="518.3" stroke="#777" stroke-width="1"/>
<text x="51.60" y="541.20" font-size="11.5" fill="#222" text-anchor="middle" textLength="24.3" lengthAdjust="spacingAndGlyphs" >2019</text>
<text x="138.40" y="541.20" font-size="11.5" fill="#222" text-anchor="middle" textLength="24.3" lengthAdjust="spacingAndGlyphs" >2020</text>
<text x="273.90" y="541.20" font-size="11.5" fill="#222" text-anchor="middle" textLength="24.3" lengthAdjust="spacingAndGlyphs" >2021</text>
<text x="409.50" y="541.20" font-size="11.5" fill="#222" text-anchor="middle" textLength="24.3" lengthAdjust="spacingAndGlyphs" >2022</text>
<text x="545.20" y="541.20" font-size="11.5" fill="#222" text-anchor="middle" textLength="24.3" lengthAdjust="spacingAndGlyphs" >2023</text>
<text x="680.60" y="541.20" font-size="11.5" fill="#222" text-anchor="middle" textLength="24.3" lengthAdjust="spacingAndGlyphs" >2024</text>
<text x="799.00" y="541.20" font-size="11.5" fill="#222" text-anchor="middle" textLength="24.3" lengthAdjust="spacingAndGlyphs" >2025</text>
</svg></body></html>
